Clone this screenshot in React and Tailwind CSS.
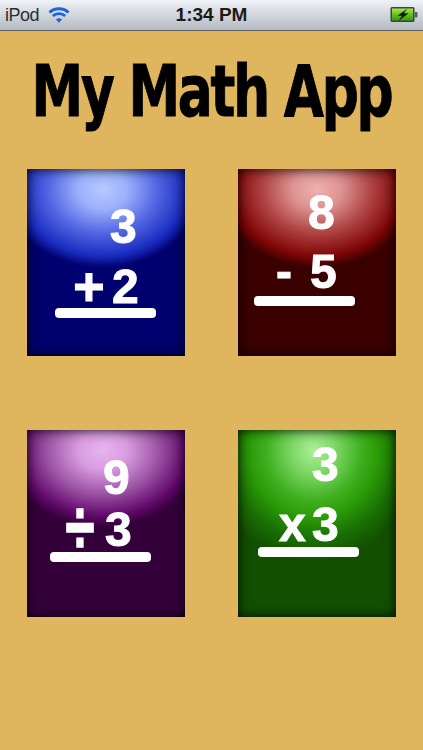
const cards = [
  {
    top: '3',
    op: '+',
    bottom: '2',
    glow: 'bg-[radial-gradient(ellipse_98px_78px_at_48%_11%,#b8c8ff_0%,#9cb0fc_25%,#5468e4_55%,#1a2cc0_85%,#00006e_100%)]',
    base: 'bg-[#00006e]',
    topClass: 'pl-[83px] pt-[36px]',
    rowClass: 'pl-[48px] mt-[16px]',
    opClass: 'w-[28px] scale-[1.12]',
    gapClass: 'gap-[9px]',
    barClass: 'ml-[28px] mt-[-1px]',
  },
  {
    top: '8',
    op: '-',
    bottom: '5',
    glow: 'bg-[radial-gradient(ellipse_98px_78px_at_50%_11%,#eeb0b0_0%,#de9292_25%,#b04444_55%,#800606_85%,#3a0000_100%)]',
    base: 'bg-[#3a0000]',
    topClass: 'pl-[70px] pt-[22px]',
    rowClass: 'pl-[38px] mt-[15px]',
    opClass: 'w-[16px]',
    gapClass: 'gap-[18px]',
    barClass: 'ml-[16px] mt-[2px]',
  },
  {
    top: '9',
    op: '÷',
    bottom: '3',
    glow: 'bg-[radial-gradient(ellipse_98px_76px_at_48%_11%,#e8b4ee_0%,#d89ce0_25%,#a058a8_55%,#620a6c_85%,#34003a_100%)]',
    base: 'bg-[#34003a]',
    topClass: 'pl-[76px] pt-[26px]',
    rowClass: 'pl-[40px] mt-[8px]',
    opClass: 'w-[28px] scale-y-[1.6] scale-x-[1.1] -translate-y-[3px]',
    gapClass: 'gap-[10px]',
    barClass: 'ml-[23px] mt-[0px]',
  },
  {
    top: '3',
    op: 'x',
    bottom: '3',
    glow: 'bg-[radial-gradient(ellipse_105px_110px_at_48%_11%,#aaf098_0%,#80d868_20%,#40b020_45%,#2c9c08_60%,#1a7004_80%,#125000_100%)]',
    base: 'bg-[#125000]',
    topClass: 'pl-[74px] pt-[13px]',
    rowClass: 'pl-[41px] mt-[16px]',
    opClass: 'w-[25px]',
    gapClass: 'gap-[8px]',
    barClass: 'ml-[20px] mt-[0px]',
  },
]

const digit = "font-['Liberation_Sans',sans-serif] font-bold text-[48px] leading-[44px] text-[#fdfdfd] [-webkit-text-stroke:1px_#fdfdfd] blur-[0.5px]"

const FlashCard = ({ card }) => (
  <div className={`relative h-[187px] w-[158px] overflow-hidden ${card.base}`}>
    <div className={`absolute inset-0 ${card.glow}`} />
    <div className="absolute inset-0 shadow-[inset_0_0_12px_rgba(0,0,0,0.9)]" />
    <div className="relative flex flex-col">
      <div className={`${card.topClass} ${digit}`}>{card.top}</div>
      <div className={`flex items-center ${card.rowClass} ${card.gapClass} ${digit}`}>
        <span className={card.opClass}>{card.op}</span>
        <span>{card.bottom}</span>
      </div>
      <div className={`h-[10px] w-[101px] rounded-[4px] bg-white blur-[0.6px] ${card.barClass}`} />
    </div>
  </div>
)

const WifiIcon = () => (
  <svg width="22" height="18" viewBox="0 0 22 18" className="ml-[9px]">
    <path d="M1.5 6.5C6.5 1.5 15.5 1.5 20.5 6.5" fill="none" stroke="#1f63d8" strokeWidth="2.8" />
    <path d="M4.8 10C8.2 6.8 13.8 6.8 17.2 10" fill="none" stroke="#1f63d8" strokeWidth="2.8" />
    <path d="M8 13.4C9.7 11.9 12.3 11.9 14 13.4L11 16.8Z" fill="#1f63d8" />
  </svg>
)

const BatteryIcon = () => (
  <svg width="28" height="18" viewBox="0 0 28 18">
    <defs>
      <linearGradient id="charge" x1="0" y1="0" x2="0" y2="1">
        <stop offset="0" stopColor="#a8e84a" />
        <stop offset="0.5" stopColor="#62c41c" />
        <stop offset="1" stopColor="#3c9a10" />
      </linearGradient>
    </defs>
    <rect x="0.5" y="1" width="24" height="15" rx="1.5" fill="#3d4347" />
    <rect x="2" y="2.5" width="21" height="12" fill="url(#charge)" />
    <rect x="24.5" y="6" width="3" height="5.5" rx="1" fill="#5a6066" />
    <path d="M17.5 2.5L7.5 9.8H12L8.5 15L18.5 7.2H13.8Z" fill="#11190c" />
  </svg>
)

const App = () => {
  return (
    <div className="h-[750px] w-[423px] overflow-hidden bg-[#dfb55e]">
      <div className="flex h-[31px] items-center justify-between border-b border-b-[#5f5f5f] bg-gradient-to-b from-[#f0f3f8] to-[#b4bac2] pl-[5px] pr-[5px]">
        <div className="flex w-[120px] items-center">
          <span className="font-['Liberation_Sans',sans-serif] text-[18px] tracking-[-0.5px] text-[#2b2f33]">iPod</span>
          <WifiIcon />
        </div>
        <span className="font-['Liberation_Sans',sans-serif] text-[19px] font-bold text-[#1a1a1a]">1:34 PM</span>
        <div className="flex w-[120px] justify-end">
          <BatteryIcon />
        </div>
      </div>

      <div className="mt-[19px] flex h-[84px] justify-center">
        <h1 className="shrink-0 font-['DejaVu_Sans',sans-serif] text-[71px] font-bold leading-[84px] tracking-[-3px] whitespace-nowrap text-black [-webkit-text-stroke:1px_black] scale-x-[0.73]">
          My Math App
        </h1>
      </div>

      <div className="mt-[35px] grid grid-cols-[158px_158px] gap-x-[53px] gap-y-[74px] pl-[27px]">
        {cards.map((card, index) => (
          <FlashCard key={index} card={card} />
        ))}
      </div>
    </div>
  )
}

export default App
